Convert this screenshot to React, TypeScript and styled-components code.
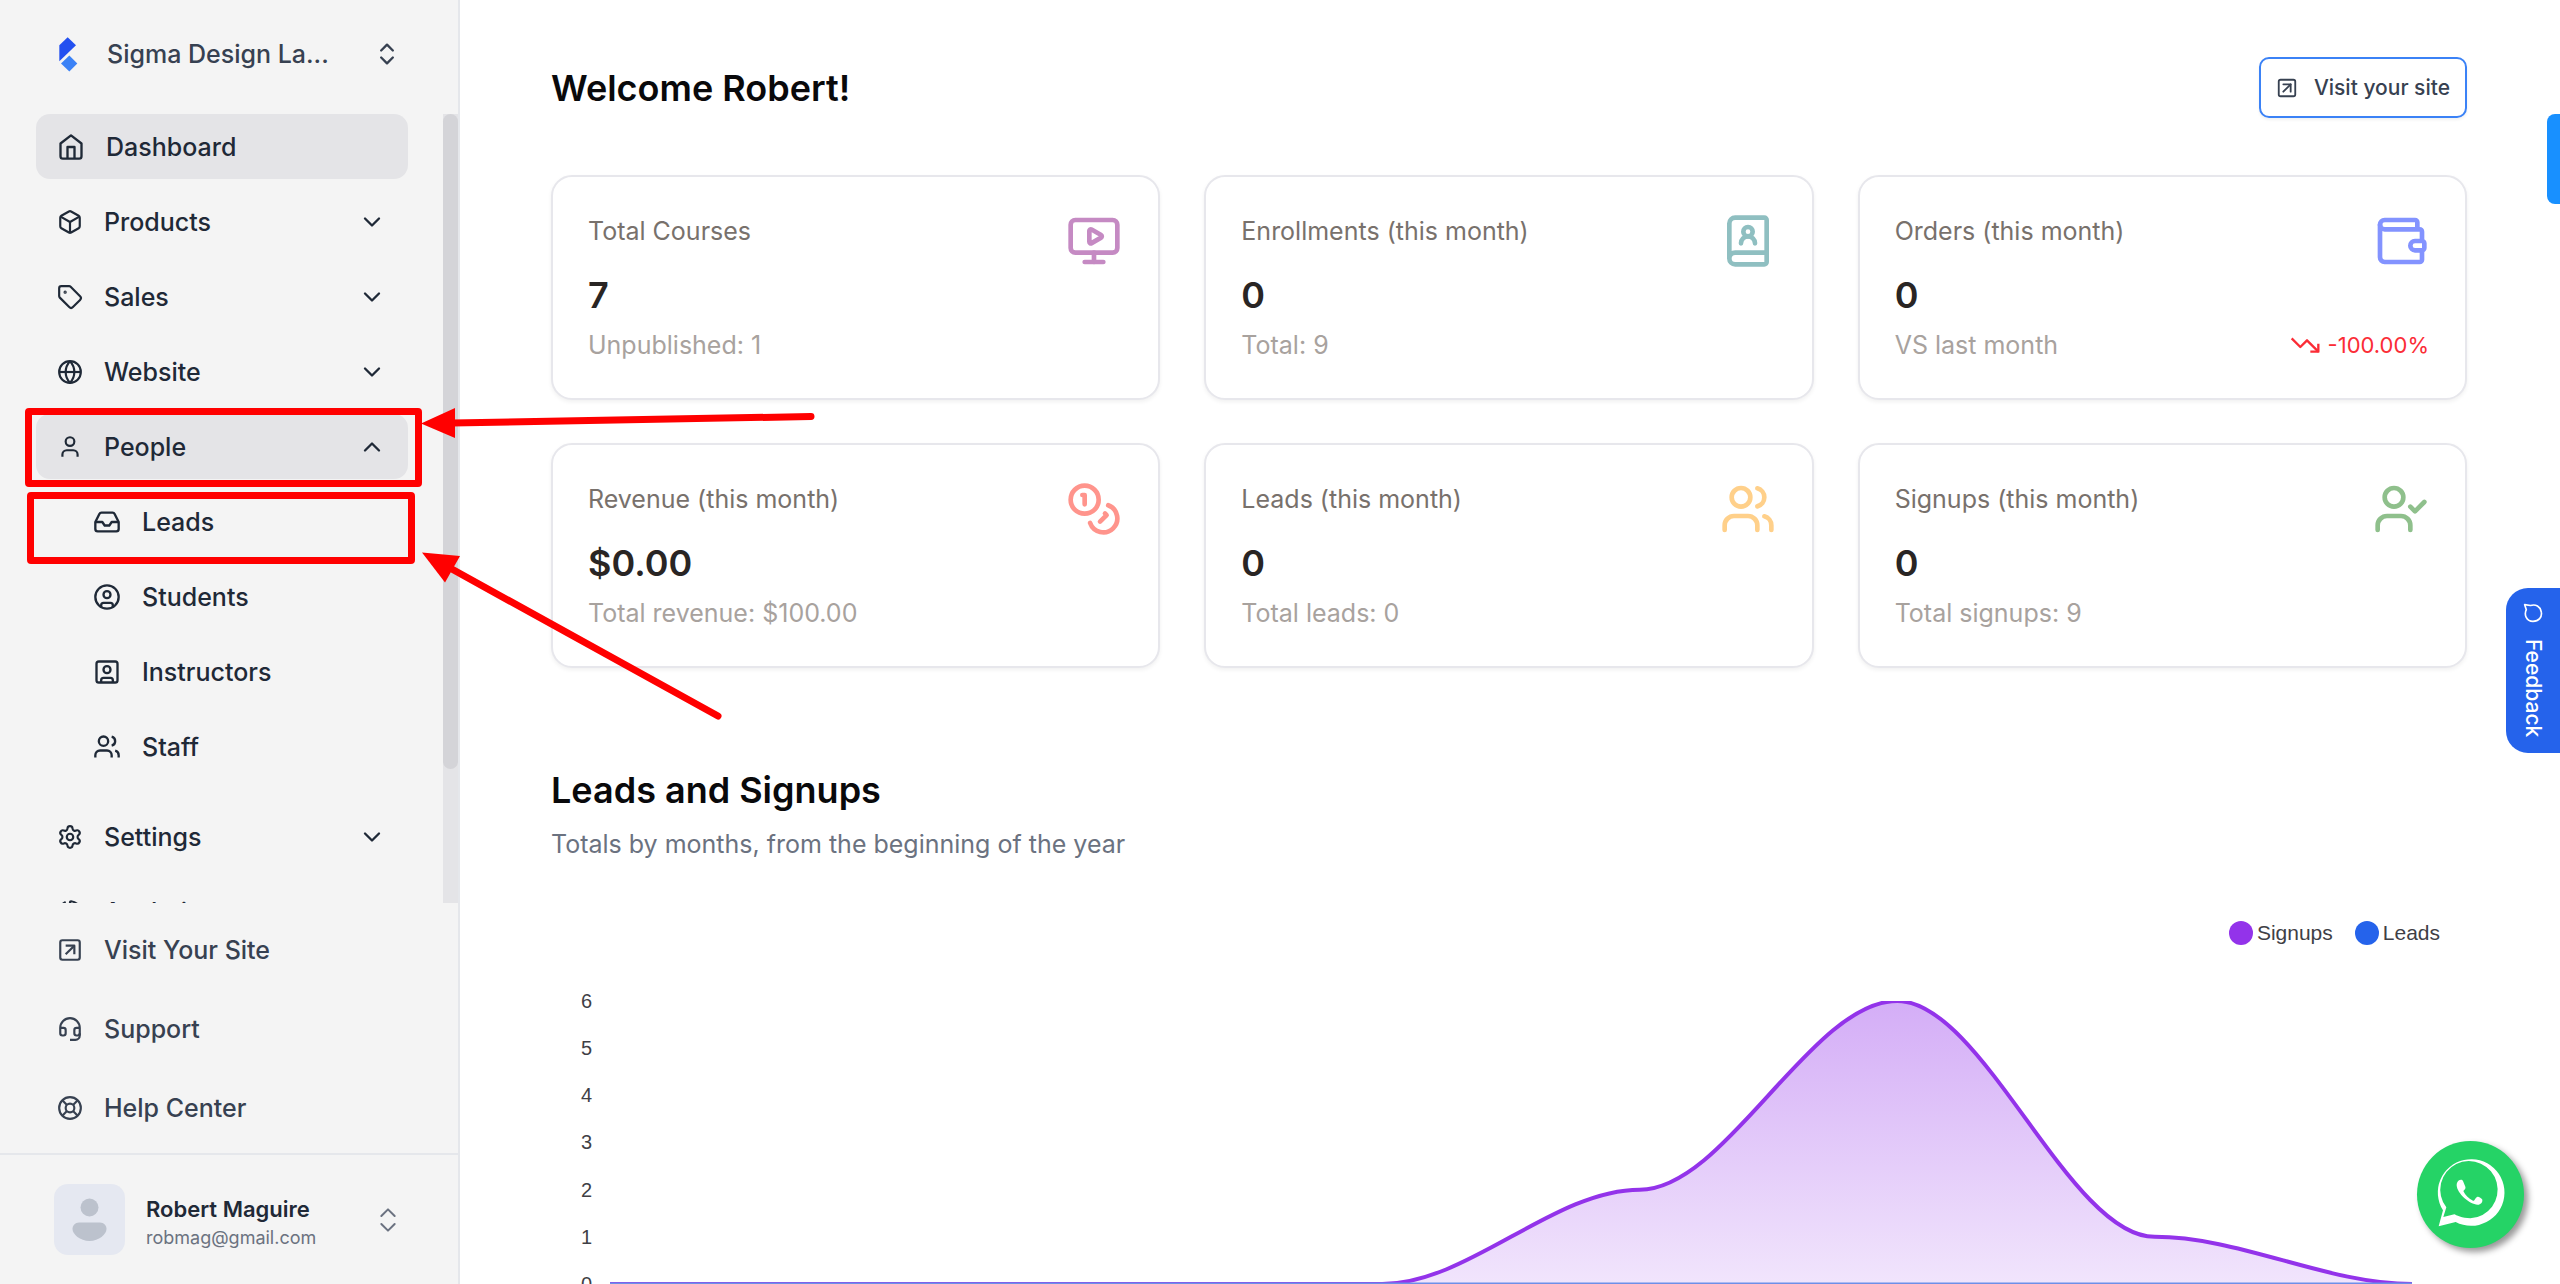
import React from 'react';
import styled, { createGlobalStyle, css } from 'styled-components';
import {
  BookUser,
  Box,
  ChartPie,
  ChevronDown,
  ChevronUp,
  ChevronsUpDown,
  CircleUser,
  Globe,
  Headset,
  Inbox,
  LifeBuoy,
  MonitorPlay,
  Settings,
  SquareArrowUpRight,
  SquareUser,
  Tag,
  TrendingDown,
  User,
  UserCheck,
  Users,
  Wallet,
} from 'lucide-react';

const GlobalStyle = createGlobalStyle`
  *, *::before, *::after { box-sizing: border-box; }
  body {
    margin: 0;
    background: #ffffff;
    font-family: Inter, "Liberation Sans", sans-serif;
    color: #09090b;
  }
  h1, h2, p { margin: 0; }
  ul { margin: 0; padding: 0; list-style: none; }
  a { color: inherit; text-decoration: none; }
  button { font: inherit; border: 0; background: none; padding: 0; cursor: pointer; }
`;

const Page = styled.div`
  position: relative;
  display: flex;
  height: 100vh;
  overflow: hidden;
`;

/* ---------- sidebar ---------- */

const Sidebar = styled.aside`
  display: flex;
  flex-direction: column;
  flex: 0 0 460px;
  background: #f4f4f4;
  border-right: 2px solid #e5e7eb;
`;

const SchoolSwitcher = styled.button`
  display: flex;
  align-items: center;
  flex: 0 0 114px;
  && { padding: 0 57px 6px 57px; }
  color: #374151;
  text-align: left;
`;

const SchoolName = styled.span`
  flex: 1;
  margin-left: 27px;
  font-size: 25px;
  line-height: 36px;
  font-weight: 500;
`;

const ScrollArea = styled.div`
  display: flex;
  flex: 1 1 0;
  min-height: 0;
  overflow: hidden;
`;

const Nav = styled.nav`
  flex: 1;
  padding: 0 35px 0 36px;
`;

const NavList = styled.ul`
  display: flex;
  flex-direction: column;
  gap: 10px;
`;

const SubList = styled(NavList)`
  padding: 10px 0 15px;
`;

const rowStyles = css`
  display: flex;
  align-items: center;
  gap: 21px;
  width: 100%;
  height: 65px;
  padding: 0 22px 0 21px;
  border-radius: 14px;
  color: #1f2937;
  font-size: 25px;
  line-height: 36px;
  font-weight: 500;
  text-align: left;

  > svg:first-child { stroke-linecap: butt; }
`;

const NavLink = styled.a<{ $active?: boolean; $nested?: boolean }>`
  ${rowStyles}
  background: ${(p) => (p.$active ? '#e4e4e7' : 'transparent')};
  padding-left: ${(p) => (p.$nested ? '57px' : '21px')};
`;

const NavButton = styled.button<{ $active?: boolean }>`
  &&& {
    ${rowStyles}
    background: ${(p) => (p.$active ? '#e4e4e7' : 'transparent')};
  }
`;

const NavLabel = styled.span`
  flex: 1;
`;

const ScrollTrack = styled.div`
  flex: 0 0 15px;
  background: #e4e4e7;
`;

const ScrollThumb = styled.div`
  height: 83%;
  border-radius: 8px;
  background: #d4d4d8;
`;

const FooterLinks = styled.ul`
  display: flex;
  flex-direction: column;
  gap: 15px;
  padding: 15px 36px 13px;
  border-bottom: 2px solid #e5e7eb;
`;

const FooterLink = styled.a`
  ${rowStyles}
  height: 64px;
  color: #374151;
`;

const Account = styled.button`
  display: flex;
  align-items: center;
  flex: 0 0 129px;
  && { padding: 0 54px; }
  color: #6b7280;
  text-align: left;
`;

const Avatar = styled.span`
  display: flex;
  align-items: center;
  justify-content: center;
  width: 71px;
  height: 71px;
  border-radius: 14px;
  background: #e5e8f1;
`;

const AccountText = styled.span`
  display: flex;
  flex-direction: column;
  flex: 1;
  margin-left: 21px;
  padding-top: 6px;
`;

const AccountName = styled.span`
  font-size: 22px;
  line-height: 30px;
  font-weight: 600;
  color: #1f2937;
`;

const AccountMail = styled.span`
  font-size: 18px;
  line-height: 28px;
`;

/* ---------- main column ---------- */

const Main = styled.main`
  flex: 1;
  min-width: 0;
  padding: 57px 93px 0 91px;
`;

const TopBar = styled.header`
  display: flex;
  align-items: center;
  justify-content: space-between;
  margin-bottom: 57px;
`;

const Title = styled.h1`
  font-size: 36px;
  line-height: 44px;
  font-weight: 600;
`;

const VisitLink = styled.a`
  display: flex;
  align-items: center;
  gap: 16px;
  height: 61px;
  padding: 0 15px;
  border: 2px solid #3b82f6;
  border-radius: 10px;
  box-shadow: 0 2px 3px rgba(0, 0, 0, 0.06);
  color: #374151;
  font-size: 21px;
  line-height: 30px;
  font-weight: 500;
`;

const CardGrid = styled.section`
  display: grid;
  grid-template-columns: repeat(3, 1fr);
  gap: 43px 44px;
`;

const Card = styled.article`
  padding: 36px 36px 35px 35px;
  border: 2px solid #e7e7ec;
  border-radius: 21px;
  background: #ffffff;
  box-shadow: 0 2px 4px rgba(0, 0, 0, 0.06);
`;

const CardTop = styled.div<{ $tint: string }>`
  display: flex;
  align-items: flex-start;
  justify-content: space-between;
  height: 56px;

  svg { color: ${(p) => p.$tint}; }
`;

const CardLabel = styled.h2`
  font-size: 25px;
  line-height: 36px;
  font-weight: 400;
  color: #78716c;
`;

const CardValue = styled.p`
  margin: 4px 0 10px;
  font-size: 36px;
  line-height: 44px;
  font-weight: 600;
  color: #292524;
`;

const CardFoot = styled.div`
  display: flex;
  align-items: center;
  justify-content: space-between;
  font-size: 25px;
  line-height: 36px;
  color: #a8a29e;
`;

const Trend = styled.span`
  display: flex;
  align-items: center;
  gap: 7px;
  font-size: 22px;
  color: #fb2c36;

  svg { stroke-linecap: butt; }
`;

const ChartSection = styled.section`
  padding-top: 100px;
`;

const SectionTitle = styled.h2`
  font-size: 36px;
  line-height: 44px;
  font-weight: 600;
`;

const SectionNote = styled.p`
  margin-top: 14px;
  font-size: 25px;
  line-height: 36px;
  color: #6b7280;
`;

const Legend = styled.ul`
  display: flex;
  justify-content: flex-end;
  gap: 22px;
  padding: 57px 27px 0 0;
  font-family: "Liberation Sans", Arial, sans-serif;
  font-size: 21px;
  line-height: 28px;
  color: #3f3f46;
`;

const LegendItem = styled.li<{ $dot: string }>`
  display: flex;
  align-items: center;
  gap: 4px;

  &::before {
    content: '';
    width: 24px;
    height: 24px;
    border-radius: 50%;
    background: ${(p) => p.$dot};
  }
`;

const ChartBody = styled.div`
  display: flex;
  gap: 18px;
  padding: 54px 55px 0 0;
`;

const Axis = styled.ul`
  display: flex;
  flex-direction: column;
  justify-content: space-between;
  width: 41px;
  height: 307px;
  margin-top: -12px;
  font-family: "Liberation Sans", Arial, sans-serif;
  font-size: 20px;
  line-height: 24px;
  text-align: right;
  color: #3f3f46;
`;

const Plot = styled.svg`
  display: block;
  flex: 1;
  min-width: 0;
  height: 283px;
  overflow: hidden;
`;

/* ---------- floating elements ---------- */

const SideTab = styled.button`
  position: absolute;
  top: 114px;
  right: 0;
  width: 13px;
  height: 90px;
  border-radius: 8px 0 0 8px;
  && { background: #1890ff; }
`;

const FeedbackTab = styled.button`
  position: absolute;
  top: 588px;
  right: 0;
  display: flex;
  align-items: center;
  gap: 16px;
  width: 54px;
  height: 165px;
  border-radius: 22px 0 0 22px;
  && {
    padding: 15px 0;
    background: #2563eb;
    writing-mode: vertical-rl;
    font-size: 21px;
    line-height: 54px;
    font-weight: 500;
    color: #ffffff;
  }
`;

const WhatsAppButton = styled.a`
  position: absolute;
  right: 36px;
  bottom: 36px;
  width: 107px;
  height: 107px;
  border-radius: 50%;
  background: #25d366;
  box-shadow: 4px 4px 6px #999999;
`;

const Highlight = styled.div<{ $top: number; $left: number; $width: number; $height: number }>`
  position: absolute;
  top: ${(p) => p.$top}px;
  left: ${(p) => p.$left}px;
  width: ${(p) => p.$width}px;
  height: ${(p) => p.$height}px;
  border: 7px solid #ff0000;
  border-radius: 4px;
  pointer-events: none;
`;

const Arrows = styled.svg`
  position: absolute;
  top: 400px;
  left: 410px;
  pointer-events: none;
`;

/* ---------- drawings ---------- */

function Logo() {
  return (
    <svg width="23" height="35" viewBox="0 0 69 104" aria-hidden="true">
      <path d="M7 24 32 0 57 24 7 72Z" fill="#2350f0" />
      <path d="M37 55 61 79 37 103 12 79Z" fill="#3b82f6" />
    </svg>
  );
}

function HomeIcon({ size }: { size: number }) {
  return (
    <svg width={size} height={size} viewBox="0 0 24 24" fill="none" stroke="currentColor" strokeWidth="2" strokeLinejoin="round" aria-hidden="true">
      <path d="M3 9l9-7 9 7v11a2 2 0 0 1-2 2H5a2 2 0 0 1-2-2z" />
      <path d="M9 22V12h6v10" />
    </svg>
  );
}

function CoinsIcon({ size }: { size: number }) {
  return (
    <svg width={size} height={size} viewBox="0 0 24 24" fill="none" stroke="currentColor" strokeWidth="2" strokeLinecap="round" strokeLinejoin="round" aria-hidden="true">
      <circle cx="8" cy="8" r="6" />
      <path d="M18.09 10.37A6 6 0 1 1 10.34 18" />
      <path d="M7 6h1v4" />
      <path d="m16.71 13.88.7.71-2.82 2.82" />
    </svg>
  );
}

function PersonShape() {
  return (
    <svg width="35" height="43" viewBox="0 0 35 43" fill="#bcc2cd" aria-hidden="true">
      <circle cx="17.5" cy="9.5" r="9" />
      <path d="M7 24.500h21c4 0 6.500 3 6.500 6.500 0 5-7.500 12-17 12S.5 36 .5 31c0-3.500 2.500-6.500 6.500-6.500Z" />
    </svg>
  );
}

function WhatsAppGlyph() {
  return (
    <svg width="107" height="107" viewBox="0 0 321 321" aria-hidden="true">
      <path
        fill="#ffffff"
        fillRule="evenodd"
        d="M65 256 78 208A100 100 0 1 1 116 243ZM79 228 112 220C116 222 136 232 160 232A86 86 0 1 0 88 199Z"
      />
      <path
        fill="#ffffff"
        d="M126 118c4-3 10-3 12 2l7 17c2 5-2 9-6 13 6 13 15 22 29 29 5 2 8-12 14-12 3 0 13 5 14 9 1 8-5 15-14 15-24 0-62-34-63-58 0-6 2-11 7-15Z"
      />
    </svg>
  );
}

function BubbleIcon() {
  return (
    <svg width="20" height="20" viewBox="0 0 24 24" fill="none" stroke="currentColor" strokeWidth="2" strokeLinejoin="round" aria-hidden="true">
      <path d="M2 2 4 8C1 14 4 22 12 22C19 22 23 17 22 11C21 4 15 1 9 3Z" />
    </svg>
  );
}

/* ---------- data ---------- */

const ICON = { size: 26, strokeWidth: 2 };
const SUB_ICON = { size: 28, strokeWidth: 2 };
const CARD_ICON = { size: 56, strokeWidth: 2 };

const sections = [
  { label: 'Products', icon: <Box {...ICON} /> },
  { label: 'Sales', icon: <Tag {...ICON} /> },
  { label: 'Website', icon: <Globe {...ICON} /> },
  {
    label: 'People',
    icon: <User {...ICON} />,
    open: true,
    children: [
      { label: 'Leads', icon: <Inbox {...SUB_ICON} /> },
      { label: 'Students', icon: <CircleUser {...SUB_ICON} /> },
      { label: 'Instructors', icon: <SquareUser {...SUB_ICON} /> },
      { label: 'Staff', icon: <Users {...SUB_ICON} /> },
    ],
  },
  { label: 'Settings', icon: <Settings {...ICON} /> },
  { label: 'Analytics', icon: <ChartPie {...ICON} /> },
];

const footerLinks = [
  { label: 'Visit Your Site', icon: <SquareArrowUpRight {...ICON} /> },
  { label: 'Support', icon: <Headset {...ICON} /> },
  { label: 'Help Center', icon: <LifeBuoy {...ICON} /> },
];

const cards = [
  { label: 'Total Courses', value: '7', note: 'Unpublished: 1', tint: '#c58ac3', icon: <MonitorPlay {...CARD_ICON} /> },
  { label: 'Enrollments (this month)', value: '0', note: 'Total: 9', tint: '#8fbfc1', icon: <BookUser {...CARD_ICON} /> },
  { label: 'Orders (this month)', value: '0', note: 'VS last month', trend: '-100.00%', tint: '#8393ff', icon: <Wallet {...CARD_ICON} /> },
  { label: 'Revenue (this month)', value: '$0.00', note: 'Total revenue: $100.00', tint: '#ff948c', icon: <CoinsIcon size={56} /> },
  { label: 'Leads (this month)', value: '0', note: 'Total leads: 0', tint: '#ffd08a', icon: <Users {...CARD_ICON} /> },
  { label: 'Signups (this month)', value: '0', note: 'Total signups: 9', tint: '#8fc08c', icon: <UserCheck {...CARD_ICON} /> },
];

const signups = [0, 0, 0, 0, 2, 6, 1, 0];
const ticks = [6, 5, 4, 3, 2, 1, 0];
const PLOT_W = 700;
const PLOT_H = 283;

/* Smooth line whose tangent is level at every month. */
function levelCurve(values: number[]) {
  const step = PLOT_W / (values.length - 1);
  const y = (v: number) => PLOT_H - (v / 6) * PLOT_H;
  return values.reduce((d, v, i) => {
    if (i === 0) return `M0 ${y(v)}`;
    const x0 = (i - 1) * step;
    return `${d}C${x0 + step / 3} ${y(values[i - 1])} ${x0 + (2 * step) / 3} ${y(v)} ${x0 + step} ${y(v)}`;
  }, '');
}

function SignupsChart() {
  const line = levelCurve(signups);
  return (
    <ChartBody>
      <Axis>
        {ticks.map((t) => (
          <li key={t}>{t}</li>
        ))}
      </Axis>
      <Plot viewBox={`0 0 ${PLOT_W} ${PLOT_H}`} preserveAspectRatio="none" role="img" aria-label="Signups and leads by month">
        <defs>
          <linearGradient id="signups-fill" x1="0" y1="0" x2="0" y2="1">
            <stop offset="0%" stopColor="#9333ea" stopOpacity="0.4" />
            <stop offset="100%" stopColor="#9333ea" stopOpacity="0.13" />
          </linearGradient>
        </defs>
        <path d={`${line}L${PLOT_W} ${PLOT_H}L0 ${PLOT_H}Z`} fill="url(#signups-fill)" />
        <path d={line} fill="none" stroke="#9333ea" strokeWidth="4" vectorEffect="non-scaling-stroke" />
        <path d={`M0 ${PLOT_H}H${PLOT_W}`} stroke="#6d8fe8" strokeWidth="3" vectorEffect="non-scaling-stroke" />
      </Plot>
    </ChartBody>
  );
}

export default function App() {
  return (
    <>
      <GlobalStyle />
      <Page>
        <Sidebar>
          <SchoolSwitcher type="button">
            <Logo />
            <SchoolName>Sigma Design La...</SchoolName>
            <ChevronsUpDown size={28} strokeWidth={2} />
          </SchoolSwitcher>

          <ScrollArea>
            <Nav>
              <NavList>
                <li>
                  <NavLink href="#dashboard" $active>
                    <HomeIcon size={28} />
                    <NavLabel>Dashboard</NavLabel>
                  </NavLink>
                </li>
                {sections.map((s) => (
                  <li key={s.label}>
                    <NavButton type="button" $active={s.open} aria-expanded={Boolean(s.open)}>
                      {s.icon}
                      <NavLabel>{s.label}</NavLabel>
                      {s.open ? <ChevronUp size={28} /> : <ChevronDown size={28} />}
                    </NavButton>
                    {s.children && (
                      <SubList>
                        {s.children.map((c) => (
                          <li key={c.label}>
                            <NavLink href={`#${c.label.toLowerCase()}`} $nested>
                              {c.icon}
                              <NavLabel>{c.label}</NavLabel>
                            </NavLink>
                          </li>
                        ))}
                      </SubList>
                    )}
                  </li>
                ))}
              </NavList>
            </Nav>
            <ScrollTrack>
              <ScrollThumb />
            </ScrollTrack>
          </ScrollArea>

          <FooterLinks>
            {footerLinks.map((f) => (
              <li key={f.label}>
                <FooterLink href="#">
                  {f.icon}
                  <NavLabel>{f.label}</NavLabel>
                </FooterLink>
              </li>
            ))}
          </FooterLinks>

          <Account type="button">
            <Avatar>
              <PersonShape />
            </Avatar>
            <AccountText>
              <AccountName>Robert Maguire</AccountName>
              <AccountMail>robmag@gmail.com</AccountMail>
            </AccountText>
            <ChevronsUpDown size={32} strokeWidth={1.5} />
          </Account>
        </Sidebar>

        <Main>
          <TopBar>
            <Title>Welcome Robert!</Title>
            <VisitLink href="#">
              <SquareArrowUpRight size={22} strokeWidth={2} />
              Visit your site
            </VisitLink>
          </TopBar>

          <CardGrid>
            {cards.map((c) => (
              <Card key={c.label}>
                <CardTop $tint={c.tint}>
                  <CardLabel>{c.label}</CardLabel>
                  {c.icon}
                </CardTop>
                <CardValue>{c.value}</CardValue>
                <CardFoot>
                  <span>{c.note}</span>
                  {c.trend && (
                    <Trend>
                      <TrendingDown size={32} strokeWidth={1.75} />
                      {c.trend}
                    </Trend>
                  )}
                </CardFoot>
              </Card>
            ))}
          </CardGrid>

          <ChartSection>
            <SectionTitle>Leads and Signups</SectionTitle>
            <SectionNote>Totals by months, from the beginning of the year</SectionNote>
            <Legend>
              <LegendItem $dot="#9333ea">Signups</LegendItem>
              <LegendItem $dot="#2563eb">Leads</LegendItem>
            </Legend>
            <SignupsChart />
          </ChartSection>
        </Main>

        <SideTab type="button" aria-label="Open panel" />
        <FeedbackTab type="button">
          <BubbleIcon />
          Feedback
        </FeedbackTab>
        <WhatsAppButton href="#" aria-label="WhatsApp">
          <WhatsAppGlyph />
        </WhatsAppButton>

        <Highlight $top={408} $left={25} $width={397} $height={79} />
        <Highlight $top={492} $left={27} $width={388} $height={72} />
        <Arrows width="420" height="330" viewBox="410 400 420 330" aria-hidden="true">
          <g stroke="#ff0000" strokeWidth="7" strokeLinecap="round" fill="#ff0000">
            <path d="M811 416.500 452 423" />
            <path d="M718 716 450 568" />
          </g>
          <path d="M421 423.500 455 408V438Z" fill="#ff0000" />
          <path d="M422 552.500 460 556 445 582.500Z" fill="#ff0000" />
        </Arrows>
      </Page>
    </>
  );
}
